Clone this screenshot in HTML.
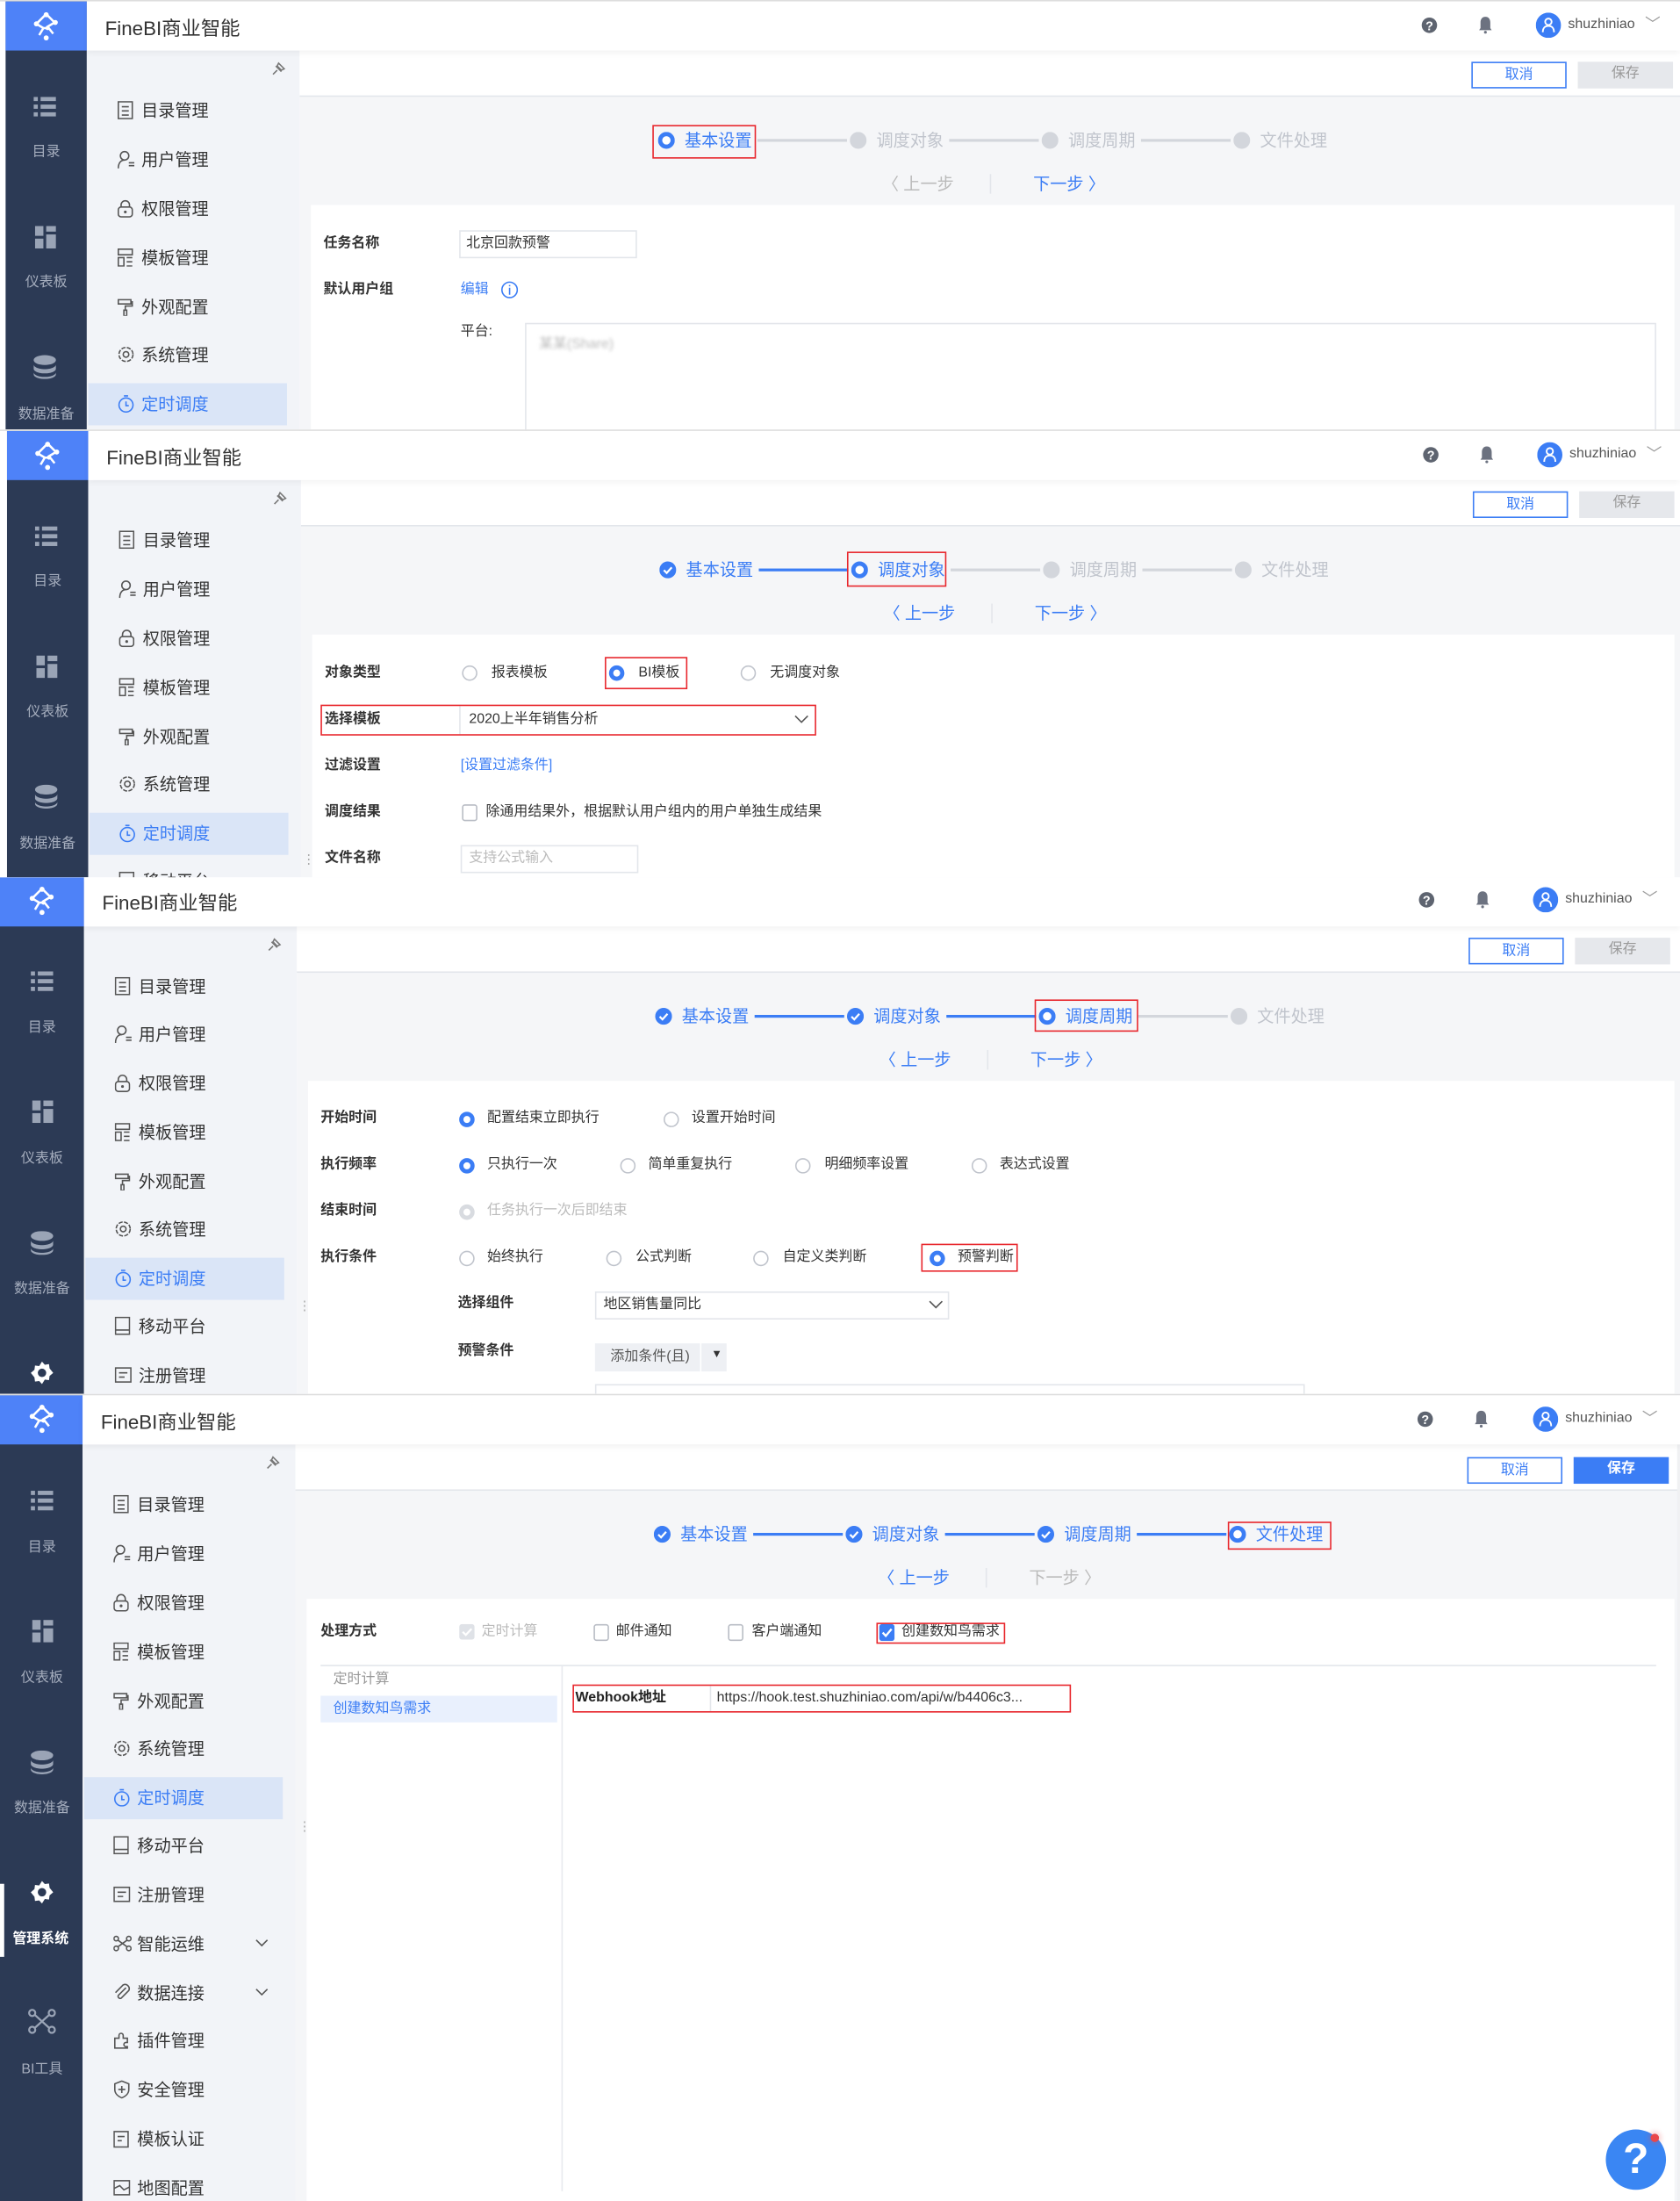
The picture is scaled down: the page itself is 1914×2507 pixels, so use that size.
<!DOCTYPE html>
<html><head><meta charset="utf-8">
<style>
*{margin:0;padding:0;box-sizing:border-box}
html,body{width:1914px;height:2507px;overflow:hidden;background:#fff}
body{font-family:"Liberation Sans","Noto Sans CJK SC",sans-serif;color:#333}
#w{position:absolute;left:0;top:0;width:1200px;height:1568px;transform:scale(1.595,1.5989);transform-origin:0 0}
.p{position:absolute;left:0;width:1200px;overflow:hidden;background:#fff}
.a{position:absolute;white-space:nowrap}
.rail{position:absolute;top:0;width:58px;height:100%;background:#2c3a55}
.logo{position:absolute;top:0;width:58px;height:35px;background:#4e82f8}
.hdr{position:absolute;top:0;height:35px;right:0;background:#fff;box-shadow:0 2px 4px rgba(0,0,0,.05);z-index:2}
.nav{position:absolute;top:35px;width:152px;height:100%;background:#f2f4f8}
.ni{position:absolute;font-size:12px;line-height:16px;color:#333;white-space:nowrap}
.ni svg{position:absolute;left:-17px;top:1px}
.rl{position:absolute;width:58px;text-align:center;font-size:10px;line-height:14px;color:#a5adbd}
.main{position:absolute;top:35px;right:0;height:100%;background:#f5f6f8}
.tb{position:absolute;left:0;right:0;top:0;height:33px;background:#fff;border-bottom:1px solid #e3e6eb}
.btn{position:absolute;width:68px;height:19px;font-size:10px;line-height:17px;text-align:center}
.form{position:absolute;top:110px;left:8px;right:4px;height:100%;background:#fff}
.lb{position:absolute;font-size:10px;font-weight:bold;line-height:14px;color:#333;white-space:nowrap}
.tx{position:absolute;font-size:10px;line-height:14px;color:#333;white-space:nowrap}
.rd{position:absolute;width:11px;height:11px;border:1px solid #c0c4cc;border-radius:50%;background:#fff}
.rd.on{border:3.5px solid #3b7df5}
.rd.dis{border:3.5px solid #d8dbe0}
.cb{position:absolute;width:10px;height:10px;border:1px solid #b8bcc4;border-radius:2px;background:#fff}
.red{position:absolute;border:1.5px solid #e8262c}
.st{position:absolute;top:0;width:600px;height:150px}
.sl{position:absolute;font-size:12px;line-height:16px;top:91px;white-space:nowrap}
.ln{position:absolute;top:98px;height:2px;width:64px}
.sc{position:absolute;top:93px}
.pv{position:absolute;top:122px;font-size:12px;line-height:16px;white-space:nowrap}
</style></head><body><div id="w">

<!-- ============ PANEL 1 ============ -->
<div class="p" style="top:0;height:306px;border-top:1px solid #ddd">
 <div class="rail" style="left:4px"></div>
 <div class="logo" style="left:4px"><svg class="a" style="left:18px;top:7px" width="22" height="22" viewBox="0 0 22 22"><path d="M11 2L4 9l5 3-3 5M11 2l6 6-5 3 4 5M9 12h3" stroke="#fff" stroke-width="1.6" fill="none"/><circle cx="11" cy="2.5" r="1.8" fill="#fff"/><circle cx="4" cy="9" r="1.8" fill="#fff"/><circle cx="17.5" cy="8" r="1.8" fill="#fff"/><circle cx="11" cy="19" r="1.8" fill="#fff"/><circle cx="12" cy="12" r="1.5" fill="#fff"/></svg></div>
 <div class="hdr" style="left:62px"><div class="a" style="left:13px;top:9px;font-size:14px;color:#333">FineBI商业智能</div>
  <svg class="a" style="left:953px;top:11px" width="12" height="12"><circle cx="6" cy="6" r="5.5" fill="#5e6470"/><text x="6" y="9.5" font-size="9" fill="#fff" text-anchor="middle" font-family="Liberation Sans" font-weight="bold">?</text></svg>
  <svg class="a" style="left:994px;top:10px" width="10" height="13"><path d="M5 1c-2.5 0-3.5 2-3.5 4v4L0.5 10.5h9L8.5 9V5C8.5 3 7.5 1 5 1z" fill="#6c7280"/><circle cx="5" cy="12" r="1" fill="#6c7280"/></svg>
  <svg class="a" style="left:1035px;top:8px" width="18" height="18"><circle cx="9" cy="9" r="9" fill="#3b7df5"/><circle cx="9" cy="6.5" r="2.3" stroke="#fff" stroke-width="1.2" fill="none"/><path d="M5 14c0-3 1.5-4.5 4-4.5s4 1.5 4 4.5" stroke="#fff" stroke-width="1.2" fill="none"/></svg>
  <div class="a" style="left:1058px;top:11px;font-size:10px;color:#555">shuzhiniao</div><div class="a" style="left:1113px;top:8px;font-size:11px;color:#999">﹀</div></div>
 <div class="nav" style="left:62px"></div>
 <svg class="a" style="left:193px;top:43px" width="11" height="11"><path d="M2 9l3-3M4 3l4 4M6 1l4 4-2 1-3-3z" stroke="#777" stroke-width="1" fill="none"/></svg>
 <div class="a" style="left:63px;top:272px;width:142px;height:30px;background:#dae5f7"></div>
 <div class="ni" style="left:101px;top:70px"><svg width="11" height="13"><rect x=".5" y=".5" width="10" height="12" stroke="#555" fill="none"/><path d="M3 4h5M3 7h5M3 10h5" stroke="#555"/></svg>目录管理</div>
 <div class="ni" style="left:101px;top:105px"><svg width="12" height="13"><circle cx="5" cy="4" r="3" stroke="#555" fill="none"/><path d="M.5 13c0-4 2-6 4.5-6M8 9h4M8 11h4" stroke="#555" fill="none"/></svg>用户管理</div>
 <div class="ni" style="left:101px;top:140px"><svg width="11" height="13"><rect x=".5" y="5.5" width="10" height="7" rx="2" stroke="#555" fill="none"/><path d="M2.5 5.5V4a3 3 0 016 0v1.5" stroke="#555" fill="none"/><circle cx="5.5" cy="9" r="1" fill="#555"/></svg>权限管理</div>
 <div class="ni" style="left:101px;top:175px"><svg width="11" height="13"><path d="M.5.5h10v4H.5zM.5 6.5h4v6h-4zM6.5 6.5h4M6.5 9.5h4M6.5 12.5h4" stroke="#555" fill="none"/></svg>模板管理</div>
 <div class="ni" style="left:101px;top:210px"><svg width="11" height="13"><path d="M.5 1.5h9v3h-9zM9.5 3h1v3H5.5v3M4.5 9h2v4h-2z" stroke="#555" fill="none"/></svg>外观配置</div>
 <div class="ni" style="left:101px;top:244px"><svg width="12" height="13"><circle cx="6" cy="6.5" r="5" stroke="#555" fill="none" stroke-dasharray="3 1"/><circle cx="6" cy="6.5" r="2" stroke="#555" fill="none"/></svg>系统管理</div>
 <div class="ni" style="left:101px;top:279px;color:#3b7df5"><svg width="12" height="13"><circle cx="6" cy="7.5" r="5" stroke="#3b7df5" fill="none"/><path d="M6 5v3h2M4.5 1h3" stroke="#3b7df5" fill="none"/></svg>定时调度</div>
 <svg class="a" style="left:24px;top:68px" width="16" height="14"><rect y="0" width="3" height="3" fill="#9aa4b6"/><rect x="5" y="0" width="11" height="3" fill="#9aa4b6"/><rect y="5.5" width="3" height="3" fill="#9aa4b6"/><rect x="5" y="5.5" width="11" height="3" fill="#9aa4b6"/><rect y="11" width="3" height="3" fill="#9aa4b6"/><rect x="5" y="11" width="11" height="3" fill="#9aa4b6"/></svg>
 <div class="rl" style="left:4px;top:101px">目录</div>
 <svg class="a" style="left:25px;top:160px" width="15" height="16"><rect width="6" height="7" fill="#9aa4b6"/><rect x="8" width="7" height="4" fill="#9aa4b6"/><rect y="9" width="6" height="7" fill="#9aa4b6"/><rect x="8" y="6" width="7" height="10" fill="#9aa4b6"/></svg>
 <div class="rl" style="left:4px;top:194px">仪表板</div>
 <svg class="a" style="left:24px;top:252px" width="16" height="17"><ellipse cx="8" cy="3.5" rx="8" ry="3.5" fill="#9aa4b6"/><path d="M0 6.5c0 2 3.5 3.5 8 3.5s8-1.5 8-3.5v3c0 2-3.5 3.5-8 3.5S0 11.5 0 9.5zM0 12c0 2 3.5 3.5 8 3.5s8-1.5 8-3.5v1.5c0 2-3.5 3.5-8 3.5S0 15.5 0 13.5z" fill="#9aa4b6"/></svg>
 <div class="rl" style="left:4px;top:288px">数据准备</div>
 <div class="main" style="left:214px"><div class="tb"></div>
  <div class="btn" style="left:837px;top:8px;border:1px solid #3b7df5;color:#3b7df5;background:#fff">取消</div>
  <div class="btn" style="left:913px;top:8px;background:#e6e8ec;color:#999">保存</div>
  <div class="form" style="left:8px"></div></div>
 <div class="st" style="left:476px">
  <svg class="sc" style="left:-6px" width="12" height="12"><circle cx="6" cy="6" r="4.5" fill="#fff" stroke="#3b7df5" stroke-width="3"/></svg>
  <div class="sl" style="left:13px;color:#3b7df5">基本设置</div>
  <div class="ln" style="left:65px;background:#d3d6dc"></div>
  <svg class="sc" style="left:131px" width="12" height="12"><circle cx="6" cy="6" r="6" fill="#d3d6dc"/></svg>
  <div class="sl" style="left:150px;color:#c0c4cc">调度对象</div>
  <div class="ln" style="left:202px;background:#d3d6dc"></div>
  <svg class="sc" style="left:268px" width="12" height="12"><circle cx="6" cy="6" r="6" fill="#d3d6dc"/></svg>
  <div class="sl" style="left:287px;color:#c0c4cc">调度周期</div>
  <div class="ln" style="left:339px;background:#d3d6dc"></div>
  <svg class="sc" style="left:405px" width="12" height="12"><circle cx="6" cy="6" r="6" fill="#d3d6dc"/></svg>
  <div class="sl" style="left:424px;color:#c0c4cc">文件处理</div>
  <div class="pv" style="left:154px;color:#bbb">〈 上一步</div>
  <div class="a" style="left:231px;top:123px;width:1px;height:14px;background:#e3e6eb"></div>
  <div class="pv" style="left:262px;color:#3b7df5">下一步 〉</div>
  <div class="red" style="left:-10px;top:88px;width:74px;height:24px"></div>
 </div>
 <div class="lb" style="left:231px;top:166px">任务名称</div>
 <div class="a" style="left:328px;top:163px;width:127px;height:20px;border:1px solid #e3e6eb"></div>
 <div class="tx" style="left:333px;top:166px">北京回款预警</div>
 <div class="lb" style="left:231px;top:199px">默认用户组</div>
 <div class="tx" style="left:329px;top:199px;color:#3b7df5">编辑</div>
 <svg class="a" style="left:358px;top:199px" width="12" height="13"><circle cx="6" cy="6.5" r="5.5" stroke="#3b7df5" fill="none"/><path d="M6 5v5M6 3v1" stroke="#3b7df5"/></svg>
 <div class="tx" style="left:329px;top:229px">平台:</div>
 <div class="a" style="left:375px;top:229px;width:808px;height:90px;border:1px solid #e3e6eb"></div>
 <div class="tx" style="left:385px;top:238px;color:#bbb;filter:blur(1.2px)">某某(Share)</div>
</div>

<!-- ============ PANEL 2 ============ -->
<div class="p" style="top:306px;height:319px;border-top:1px solid #ddd">
 <div class="rail" style="left:5px"></div>
 <div class="logo" style="left:5px"><svg class="a" style="left:18px;top:7px" width="22" height="22" viewBox="0 0 22 22"><path d="M11 2L4 9l5 3-3 5M11 2l6 6-5 3 4 5M9 12h3" stroke="#fff" stroke-width="1.6" fill="none"/><circle cx="11" cy="2.5" r="1.8" fill="#fff"/><circle cx="4" cy="9" r="1.8" fill="#fff"/><circle cx="17.5" cy="8" r="1.8" fill="#fff"/><circle cx="11" cy="19" r="1.8" fill="#fff"/><circle cx="12" cy="12" r="1.5" fill="#fff"/></svg></div>
 <div class="hdr" style="left:63px"><div class="a" style="left:13px;top:9px;font-size:14px;color:#333">FineBI商业智能</div>
  <svg class="a" style="left:953px;top:11px" width="12" height="12"><circle cx="6" cy="6" r="5.5" fill="#5e6470"/><text x="6" y="9.5" font-size="9" fill="#fff" text-anchor="middle" font-family="Liberation Sans" font-weight="bold">?</text></svg>
  <svg class="a" style="left:994px;top:10px" width="10" height="13"><path d="M5 1c-2.5 0-3.5 2-3.5 4v4L0.5 10.5h9L8.5 9V5C8.5 3 7.5 1 5 1z" fill="#6c7280"/><circle cx="5" cy="12" r="1" fill="#6c7280"/></svg>
  <svg class="a" style="left:1035px;top:8px" width="18" height="18"><circle cx="9" cy="9" r="9" fill="#3b7df5"/><circle cx="9" cy="6.5" r="2.3" stroke="#fff" stroke-width="1.2" fill="none"/><path d="M5 14c0-3 1.5-4.5 4-4.5s4 1.5 4 4.5" stroke="#fff" stroke-width="1.2" fill="none"/></svg>
  <div class="a" style="left:1058px;top:11px;font-size:10px;color:#555">shuzhiniao</div><div class="a" style="left:1113px;top:8px;font-size:11px;color:#999">﹀</div></div>
 <div class="nav" style="left:63px"></div>
 <svg class="a" style="left:194px;top:43px" width="11" height="11"><path d="M2 9l3-3M4 3l4 4M6 1l4 4-2 1-3-3z" stroke="#777" stroke-width="1" fill="none"/></svg>
 <div class="a" style="left:64px;top:272px;width:142px;height:30px;background:#dae5f7"></div>
 <div class="ni" style="left:102px;top:70px"><svg width="11" height="13"><rect x=".5" y=".5" width="10" height="12" stroke="#555" fill="none"/><path d="M3 4h5M3 7h5M3 10h5" stroke="#555"/></svg>目录管理</div>
 <div class="ni" style="left:102px;top:105px"><svg width="12" height="13"><circle cx="5" cy="4" r="3" stroke="#555" fill="none"/><path d="M.5 13c0-4 2-6 4.5-6M8 9h4M8 11h4" stroke="#555" fill="none"/></svg>用户管理</div>
 <div class="ni" style="left:102px;top:140px"><svg width="11" height="13"><rect x=".5" y="5.5" width="10" height="7" rx="2" stroke="#555" fill="none"/><path d="M2.5 5.5V4a3 3 0 016 0v1.5" stroke="#555" fill="none"/><circle cx="5.5" cy="9" r="1" fill="#555"/></svg>权限管理</div>
 <div class="ni" style="left:102px;top:175px"><svg width="11" height="13"><path d="M.5.5h10v4H.5zM.5 6.5h4v6h-4zM6.5 6.5h4M6.5 9.5h4M6.5 12.5h4" stroke="#555" fill="none"/></svg>模板管理</div>
 <div class="ni" style="left:102px;top:210px"><svg width="11" height="13"><path d="M.5 1.5h9v3h-9zM9.5 3h1v3H5.5v3M4.5 9h2v4h-2z" stroke="#555" fill="none"/></svg>外观配置</div>
 <div class="ni" style="left:102px;top:244px"><svg width="12" height="13"><circle cx="6" cy="6.5" r="5" stroke="#555" fill="none" stroke-dasharray="3 1"/><circle cx="6" cy="6.5" r="2" stroke="#555" fill="none"/></svg>系统管理</div>
 <div class="ni" style="left:102px;top:279px;color:#3b7df5"><svg width="12" height="13"><circle cx="6" cy="7.5" r="5" stroke="#3b7df5" fill="none"/><path d="M6 5v3h2M4.5 1h3" stroke="#3b7df5" fill="none"/></svg>定时调度</div>
 <div class="ni" style="left:102px;top:313px"><svg width="11" height="13"><rect x=".5" y=".5" width="10" height="12" stroke="#555" fill="none"/></svg>移动平台</div>
 <svg class="a" style="left:25px;top:68px" width="16" height="14"><rect y="0" width="3" height="3" fill="#9aa4b6"/><rect x="5" y="0" width="11" height="3" fill="#9aa4b6"/><rect y="5.5" width="3" height="3" fill="#9aa4b6"/><rect x="5" y="5.5" width="11" height="3" fill="#9aa4b6"/><rect y="11" width="3" height="3" fill="#9aa4b6"/><rect x="5" y="11" width="11" height="3" fill="#9aa4b6"/></svg>
 <div class="rl" style="left:5px;top:101px">目录</div>
 <svg class="a" style="left:26px;top:160px" width="15" height="16"><rect width="6" height="7" fill="#9aa4b6"/><rect x="8" width="7" height="4" fill="#9aa4b6"/><rect y="9" width="6" height="7" fill="#9aa4b6"/><rect x="8" y="6" width="7" height="10" fill="#9aa4b6"/></svg>
 <div class="rl" style="left:5px;top:194px">仪表板</div>
 <svg class="a" style="left:25px;top:252px" width="16" height="17"><ellipse cx="8" cy="3.5" rx="8" ry="3.5" fill="#9aa4b6"/><path d="M0 6.5c0 2 3.5 3.5 8 3.5s8-1.5 8-3.5v3c0 2-3.5 3.5-8 3.5S0 11.5 0 9.5zM0 12c0 2 3.5 3.5 8 3.5s8-1.5 8-3.5v1.5c0 2-3.5 3.5-8 3.5S0 15.5 0 13.5z" fill="#9aa4b6"/></svg>
 <div class="rl" style="left:5px;top:288px">数据准备</div>
 <div class="main" style="left:215px"><div class="tb"></div>
  <div class="btn" style="left:837px;top:8px;border:1px solid #3b7df5;color:#3b7df5;background:#fff">取消</div>
  <div class="btn" style="left:913px;top:8px;background:#e6e8ec;color:#999">保存</div>
  <div class="form" style="left:8px"></div></div>
 <div class="a" style="left:216px;top:300px;font-size:9px;color:#aaa">⋮</div>
 <div class="st" style="left:477px">
  <svg class="sc" style="left:-6px" width="12" height="12"><circle cx="6" cy="6" r="6" fill="#3b7df5"/><path d="M3.2 6.2l2 2 3.6-4" stroke="#fff" stroke-width="1.4" fill="none"/></svg>
  <div class="sl" style="left:13px;color:#3b7df5">基本设置</div>
  <div class="ln" style="left:65px;background:#3b7df5"></div>
  <svg class="sc" style="left:131px" width="12" height="12"><circle cx="6" cy="6" r="4.5" fill="#fff" stroke="#3b7df5" stroke-width="3"/></svg>
  <div class="sl" style="left:150px;color:#3b7df5">调度对象</div>
  <div class="ln" style="left:202px;background:#d3d6dc"></div>
  <svg class="sc" style="left:268px" width="12" height="12"><circle cx="6" cy="6" r="6" fill="#d3d6dc"/></svg>
  <div class="sl" style="left:287px;color:#c0c4cc">调度周期</div>
  <div class="ln" style="left:339px;background:#d3d6dc"></div>
  <svg class="sc" style="left:405px" width="12" height="12"><circle cx="6" cy="6" r="6" fill="#d3d6dc"/></svg>
  <div class="sl" style="left:424px;color:#c0c4cc">文件处理</div>
  <div class="pv" style="left:154px;color:#3b7df5">〈 上一步</div>
  <div class="a" style="left:231px;top:123px;width:1px;height:14px;background:#e3e6eb"></div>
  <div class="pv" style="left:262px;color:#3b7df5">下一步 〉</div>
  <div class="red" style="left:128px;top:86px;width:71px;height:25px"></div>
 </div>
 <div class="lb" style="left:232px;top:166px">对象类型</div>
 <div class="rd" style="left:330px;top:167px"></div><div class="tx" style="left:351px;top:166px">报表模板</div>
 <div class="rd on" style="left:435px;top:167px"></div><div class="tx" style="left:456px;top:166px">BI模板</div>
 <div class="red" style="left:432px;top:161px;width:59px;height:23px"></div>
 <div class="rd" style="left:529px;top:167px"></div><div class="tx" style="left:550px;top:166px">无调度对象</div>
 <div class="lb" style="left:232px;top:199px">选择模板</div>
 <div class="a" style="left:328px;top:196px;width:254px;height:20px;border-left:1px solid #e3e6eb"></div>
 <div class="tx" style="left:335px;top:199px">2020上半年销售分析</div>
 <svg class="a" style="left:567px;top:202px" width="11" height="7"><path d="M1 1l4.5 4.5L10 1" stroke="#555" fill="none"/></svg>
 <div class="red" style="left:229px;top:195px;width:354px;height:22px"></div>
 <div class="lb" style="left:232px;top:232px">过滤设置</div>
 <div class="tx" style="left:329px;top:232px;color:#3b7df5">[设置过滤条件]</div>
 <div class="lb" style="left:232px;top:265px">调度结果</div>
 <div class="cb" style="left:330px;top:266px;width:11px;height:12px"></div>
 <div class="tx" style="left:347px;top:265px">除通用结果外，根据默认用户组内的用户单独生成结果</div>
 <div class="lb" style="left:232px;top:298px">文件名称</div>
 <div class="a" style="left:329px;top:295px;width:127px;height:20px;border:1px solid #e3e6eb"></div>
 <div class="tx" style="left:335px;top:298px;color:#bbb">支持公式输入</div>
</div>

<!-- ============ PANEL 3 ============ -->
<div class="p" style="top:625px;height:368px">
 <div class="rail" style="left:0;width:60px"></div>
 <div class="logo" style="left:0;width:60px"><svg class="a" style="left:19px;top:6px" width="22" height="22" viewBox="0 0 22 22"><path d="M11 2L4 9l5 3-3 5M11 2l6 6-5 3 4 5M9 12h3" stroke="#fff" stroke-width="1.6" fill="none"/><circle cx="11" cy="2.5" r="1.8" fill="#fff"/><circle cx="4" cy="9" r="1.8" fill="#fff"/><circle cx="17.5" cy="8" r="1.8" fill="#fff"/><circle cx="11" cy="19" r="1.8" fill="#fff"/><circle cx="12" cy="12" r="1.5" fill="#fff"/></svg></div>
 <div class="hdr" style="left:60px"><div class="a" style="left:13px;top:8px;font-size:14px;color:#333">FineBI商业智能</div>
  <svg class="a" style="left:953px;top:10px" width="12" height="12"><circle cx="6" cy="6" r="5.5" fill="#5e6470"/><text x="6" y="9.5" font-size="9" fill="#fff" text-anchor="middle" font-family="Liberation Sans" font-weight="bold">?</text></svg>
  <svg class="a" style="left:994px;top:9px" width="10" height="13"><path d="M5 1c-2.5 0-3.5 2-3.5 4v4L0.5 10.5h9L8.5 9V5C8.5 3 7.5 1 5 1z" fill="#6c7280"/><circle cx="5" cy="12" r="1" fill="#6c7280"/></svg>
  <svg class="a" style="left:1035px;top:7px" width="18" height="18"><circle cx="9" cy="9" r="9" fill="#3b7df5"/><circle cx="9" cy="6.5" r="2.3" stroke="#fff" stroke-width="1.2" fill="none"/><path d="M5 14c0-3 1.5-4.5 4-4.5s4 1.5 4 4.5" stroke="#fff" stroke-width="1.2" fill="none"/></svg>
  <div class="a" style="left:1058px;top:10px;font-size:10px;color:#555">shuzhiniao</div><div class="a" style="left:1113px;top:7px;font-size:11px;color:#999">﹀</div></div>
 <div class="nav" style="left:60px"></div>
 <svg class="a" style="left:190px;top:43px" width="11" height="11"><path d="M2 9l3-3M4 3l4 4M6 1l4 4-2 1-3-3z" stroke="#777" stroke-width="1" fill="none"/></svg>
 <div class="a" style="left:61px;top:271px;width:142px;height:30px;background:#dae5f7"></div>
 <div class="ni" style="left:99px;top:70px"><svg width="11" height="13"><rect x=".5" y=".5" width="10" height="12" stroke="#555" fill="none"/><path d="M3 4h5M3 7h5M3 10h5" stroke="#555"/></svg>目录管理</div>
 <div class="ni" style="left:99px;top:104px"><svg width="12" height="13"><circle cx="5" cy="4" r="3" stroke="#555" fill="none"/><path d="M.5 13c0-4 2-6 4.5-6M8 9h4M8 11h4" stroke="#555" fill="none"/></svg>用户管理</div>
 <div class="ni" style="left:99px;top:139px"><svg width="11" height="13"><rect x=".5" y="5.5" width="10" height="7" rx="2" stroke="#555" fill="none"/><path d="M2.5 5.5V4a3 3 0 016 0v1.5" stroke="#555" fill="none"/><circle cx="5.5" cy="9" r="1" fill="#555"/></svg>权限管理</div>
 <div class="ni" style="left:99px;top:174px"><svg width="11" height="13"><path d="M.5.5h10v4H.5zM.5 6.5h4v6h-4zM6.5 6.5h4M6.5 9.5h4M6.5 12.5h4" stroke="#555" fill="none"/></svg>模板管理</div>
 <div class="ni" style="left:99px;top:209px"><svg width="11" height="13"><path d="M.5 1.5h9v3h-9zM9.5 3h1v3H5.5v3M4.5 9h2v4h-2z" stroke="#555" fill="none"/></svg>外观配置</div>
 <div class="ni" style="left:99px;top:243px"><svg width="12" height="13"><circle cx="6" cy="6.5" r="5" stroke="#555" fill="none" stroke-dasharray="3 1"/><circle cx="6" cy="6.5" r="2" stroke="#555" fill="none"/></svg>系统管理</div>
 <div class="ni" style="left:99px;top:278px;color:#3b7df5"><svg width="12" height="13"><circle cx="6" cy="7.5" r="5" stroke="#3b7df5" fill="none"/><path d="M6 5v3h2M4.5 1h3" stroke="#3b7df5" fill="none"/></svg>定时调度</div>
 <div class="ni" style="left:99px;top:312px"><svg width="11" height="13"><rect x=".5" y=".5" width="10" height="12" stroke="#555" fill="none"/><path d="M.5 9.5h10" stroke="#555"/></svg>移动平台</div>
 <div class="ni" style="left:99px;top:347px"><svg width="12" height="13"><rect x=".5" y="1.5" width="11" height="10" stroke="#555" fill="none"/><path d="M3 5h6M3 8h4" stroke="#555"/></svg>注册管理</div>
 <svg class="a" style="left:22px;top:67px" width="16" height="14"><rect y="0" width="3" height="3" fill="#9aa4b6"/><rect x="5" y="0" width="11" height="3" fill="#9aa4b6"/><rect y="5.5" width="3" height="3" fill="#9aa4b6"/><rect x="5" y="5.5" width="11" height="3" fill="#9aa4b6"/><rect y="11" width="3" height="3" fill="#9aa4b6"/><rect x="5" y="11" width="11" height="3" fill="#9aa4b6"/></svg>
 <div class="rl" style="left:1px;top:101px">目录</div>
 <svg class="a" style="left:23px;top:159px" width="15" height="16"><rect width="6" height="7" fill="#9aa4b6"/><rect x="8" width="7" height="4" fill="#9aa4b6"/><rect y="9" width="6" height="7" fill="#9aa4b6"/><rect x="8" y="6" width="7" height="10" fill="#9aa4b6"/></svg>
 <div class="rl" style="left:1px;top:194px">仪表板</div>
 <svg class="a" style="left:22px;top:252px" width="16" height="17"><ellipse cx="8" cy="3.5" rx="8" ry="3.5" fill="#9aa4b6"/><path d="M0 6.5c0 2 3.5 3.5 8 3.5s8-1.5 8-3.5v3c0 2-3.5 3.5-8 3.5S0 11.5 0 9.5zM0 12c0 2 3.5 3.5 8 3.5s8-1.5 8-3.5v1.5c0 2-3.5 3.5-8 3.5S0 15.5 0 13.5z" fill="#9aa4b6"/></svg>
 <div class="rl" style="left:1px;top:287px">数据准备</div>
 <svg class="a" style="left:21px;top:344px" width="18" height="18" viewBox="0 0 18 18"><path d="M9 1l2 2.2 3-.4.4 3L17 9l-2.6 2.2-.4 3-3-.4L9 17l-2-2.2-3 .4-.4-3L1 9l2.6-2.2.4-3 3 .4z" fill="#fff"/><circle cx="9" cy="9" r="3" fill="#2c3a55"/></svg>
 <div class="main" style="left:212px"><div class="tb"></div>
  <div class="btn" style="left:837px;top:8px;border:1px solid #3b7df5;color:#3b7df5;background:#fff">取消</div>
  <div class="btn" style="left:913px;top:8px;background:#e6e8ec;color:#999">保存</div>
  <div class="form" style="left:8px"></div></div>
 <div class="a" style="left:213px;top:300px;font-size:9px;color:#aaa">⋮</div>
 <div class="st" style="left:474px">
  <svg class="sc" style="left:-6px" width="12" height="12"><circle cx="6" cy="6" r="6" fill="#3b7df5"/><path d="M3.2 6.2l2 2 3.6-4" stroke="#fff" stroke-width="1.4" fill="none"/></svg>
  <div class="sl" style="left:13px;color:#3b7df5">基本设置</div>
  <div class="ln" style="left:65px;background:#3b7df5"></div>
  <svg class="sc" style="left:131px" width="12" height="12"><circle cx="6" cy="6" r="6" fill="#3b7df5"/><path d="M3.2 6.2l2 2 3.6-4" stroke="#fff" stroke-width="1.4" fill="none"/></svg>
  <div class="sl" style="left:150px;color:#3b7df5">调度对象</div>
  <div class="ln" style="left:202px;background:#3b7df5"></div>
  <svg class="sc" style="left:268px" width="12" height="12"><circle cx="6" cy="6" r="4.5" fill="#fff" stroke="#3b7df5" stroke-width="3"/></svg>
  <div class="sl" style="left:287px;color:#3b7df5">调度周期</div>
  <div class="ln" style="left:339px;background:#d3d6dc"></div>
  <svg class="sc" style="left:405px" width="12" height="12"><circle cx="6" cy="6" r="6" fill="#d3d6dc"/></svg>
  <div class="sl" style="left:424px;color:#c0c4cc">文件处理</div>
  <div class="pv" style="left:154px;color:#3b7df5">〈 上一步</div>
  <div class="a" style="left:231px;top:123px;width:1px;height:14px;background:#e3e6eb"></div>
  <div class="pv" style="left:262px;color:#3b7df5">下一步 〉</div>
  <div class="red" style="left:265px;top:87px;width:74px;height:23px"></div>
 </div>
 <div class="lb" style="left:229px;top:165px">开始时间</div>
 <div class="rd on" style="left:328px;top:167px"></div><div class="tx" style="left:348px;top:165px">配置结束立即执行</div>
 <div class="rd" style="left:474px;top:167px"></div><div class="tx" style="left:494px;top:165px">设置开始时间</div>
 <div class="lb" style="left:229px;top:198px">执行频率</div>
 <div class="rd on" style="left:328px;top:200px"></div><div class="tx" style="left:348px;top:198px">只执行一次</div>
 <div class="rd" style="left:443px;top:200px"></div><div class="tx" style="left:463px;top:198px">简单重复执行</div>
 <div class="rd" style="left:568px;top:200px"></div><div class="tx" style="left:589px;top:198px">明细频率设置</div>
 <div class="rd" style="left:694px;top:200px"></div><div class="tx" style="left:714px;top:198px">表达式设置</div>
 <div class="lb" style="left:229px;top:231px">结束时间</div>
 <div class="rd dis" style="left:328px;top:233px"></div><div class="tx" style="left:348px;top:231px;color:#bbb">任务执行一次后即结束</div>
 <div class="lb" style="left:229px;top:264px">执行条件</div>
 <div class="rd" style="left:328px;top:266px"></div><div class="tx" style="left:348px;top:264px">始终执行</div>
 <div class="rd" style="left:433px;top:266px"></div><div class="tx" style="left:454px;top:264px">公式判断</div>
 <div class="rd" style="left:538px;top:266px"></div><div class="tx" style="left:559px;top:264px">自定义类判断</div>
 <div class="rd on" style="left:664px;top:266px"></div><div class="tx" style="left:684px;top:264px">预警判断</div>
 <div class="red" style="left:658px;top:261px;width:69px;height:20px"></div>
 <div class="lb" style="left:327px;top:297px">选择组件</div>
 <div class="a" style="left:425px;top:295px;width:253px;height:20px;border:1px solid #e3e6eb"></div>
 <div class="tx" style="left:431px;top:298px">地区销售量同比</div>
 <svg class="a" style="left:663px;top:301px" width="11" height="7"><path d="M1 1l4.5 4.5L10 1" stroke="#555" fill="none"/></svg>
 <div class="lb" style="left:327px;top:331px">预警条件</div>
 <div class="a" style="left:425px;top:332px;width:75px;height:20px;background:#eef0f4"></div>
 <div class="a" style="left:501px;top:332px;width:18px;height:20px;background:#eef0f4"></div>
 <div class="tx" style="left:436px;top:335px;color:#555">添加条件(且)</div>
 <div class="a" style="left:508px;top:335px;font-size:8px;color:#333">▼</div>
 <div class="a" style="left:425px;top:361px;width:507px;height:20px;border:1px solid #e3e6eb"></div>
</div>

<!-- ============ PANEL 4 ============ -->
<div class="p" style="top:993px;height:575px;border-top:1px solid #ddd">
 <div class="rail" style="left:0;width:59px"></div>
 <div class="logo" style="left:0;width:59px"><svg class="a" style="left:19px;top:6px" width="22" height="22" viewBox="0 0 22 22"><path d="M11 2L4 9l5 3-3 5M11 2l6 6-5 3 4 5M9 12h3" stroke="#fff" stroke-width="1.6" fill="none"/><circle cx="11" cy="2.5" r="1.8" fill="#fff"/><circle cx="4" cy="9" r="1.8" fill="#fff"/><circle cx="17.5" cy="8" r="1.8" fill="#fff"/><circle cx="11" cy="19" r="1.8" fill="#fff"/><circle cx="12" cy="12" r="1.5" fill="#fff"/></svg></div>
 <div class="hdr" style="left:59px"><div class="a" style="left:13px;top:9px;font-size:14px;color:#333">FineBI商业智能</div>
  <svg class="a" style="left:953px;top:11px" width="12" height="12"><circle cx="6" cy="6" r="5.5" fill="#5e6470"/><text x="6" y="9.5" font-size="9" fill="#fff" text-anchor="middle" font-family="Liberation Sans" font-weight="bold">?</text></svg>
  <svg class="a" style="left:994px;top:10px" width="10" height="13"><path d="M5 1c-2.5 0-3.5 2-3.5 4v4L0.5 10.5h9L8.5 9V5C8.5 3 7.5 1 5 1z" fill="#6c7280"/><circle cx="5" cy="12" r="1" fill="#6c7280"/></svg>
  <svg class="a" style="left:1036px;top:8px" width="18" height="18"><circle cx="9" cy="9" r="9" fill="#3b7df5"/><circle cx="9" cy="6.5" r="2.3" stroke="#fff" stroke-width="1.2" fill="none"/><path d="M5 14c0-3 1.5-4.5 4-4.5s4 1.5 4 4.5" stroke="#fff" stroke-width="1.2" fill="none"/></svg>
  <div class="a" style="left:1059px;top:11px;font-size:10px;color:#555">shuzhiniao</div><div class="a" style="left:1114px;top:8px;font-size:11px;color:#999">﹀</div></div>
 <div class="nav" style="left:59px"></div>
 <svg class="a" style="left:189px;top:43px" width="11" height="11"><path d="M2 9l3-3M4 3l4 4M6 1l4 4-2 1-3-3z" stroke="#777" stroke-width="1" fill="none"/></svg>
 <div class="a" style="left:60px;top:272px;width:142px;height:30px;background:#dae5f7"></div>
 <div class="ni" style="left:98px;top:70px"><svg width="11" height="13"><rect x=".5" y=".5" width="10" height="12" stroke="#555" fill="none"/><path d="M3 4h5M3 7h5M3 10h5" stroke="#555"/></svg>目录管理</div>
 <div class="ni" style="left:98px;top:105px"><svg width="12" height="13"><circle cx="5" cy="4" r="3" stroke="#555" fill="none"/><path d="M.5 13c0-4 2-6 4.5-6M8 9h4M8 11h4" stroke="#555" fill="none"/></svg>用户管理</div>
 <div class="ni" style="left:98px;top:140px"><svg width="11" height="13"><rect x=".5" y="5.5" width="10" height="7" rx="2" stroke="#555" fill="none"/><path d="M2.5 5.5V4a3 3 0 016 0v1.5" stroke="#555" fill="none"/><circle cx="5.5" cy="9" r="1" fill="#555"/></svg>权限管理</div>
 <div class="ni" style="left:98px;top:175px"><svg width="11" height="13"><path d="M.5.5h10v4H.5zM.5 6.5h4v6h-4zM6.5 6.5h4M6.5 9.5h4M6.5 12.5h4" stroke="#555" fill="none"/></svg>模板管理</div>
 <div class="ni" style="left:98px;top:210px"><svg width="11" height="13"><path d="M.5 1.5h9v3h-9zM9.5 3h1v3H5.5v3M4.5 9h2v4h-2z" stroke="#555" fill="none"/></svg>外观配置</div>
 <div class="ni" style="left:98px;top:244px"><svg width="12" height="13"><circle cx="6" cy="6.5" r="5" stroke="#555" fill="none" stroke-dasharray="3 1"/><circle cx="6" cy="6.5" r="2" stroke="#555" fill="none"/></svg>系统管理</div>
 <div class="ni" style="left:98px;top:279px;color:#3b7df5"><svg width="12" height="13"><circle cx="6" cy="7.5" r="5" stroke="#3b7df5" fill="none"/><path d="M6 5v3h2M4.5 1h3" stroke="#3b7df5" fill="none"/></svg>定时调度</div>
 <div class="ni" style="left:98px;top:313px"><svg width="11" height="13"><rect x=".5" y=".5" width="10" height="12" stroke="#555" fill="none"/><path d="M.5 9.5h10" stroke="#555"/></svg>移动平台</div>
 <div class="ni" style="left:98px;top:348px"><svg width="12" height="13"><rect x=".5" y="1.5" width="11" height="10" stroke="#555" fill="none"/><path d="M3 5h6M3 8h4" stroke="#555"/></svg>注册管理</div>
 <div class="ni" style="left:98px;top:383px"><svg width="13" height="13"><circle cx="2" cy="3" r="1.6" stroke="#555" fill="none"/><circle cx="11" cy="3" r="1.6" stroke="#555" fill="none"/><circle cx="2" cy="10" r="1.6" stroke="#555" fill="none"/><circle cx="11" cy="10" r="1.6" stroke="#555" fill="none"/><path d="M3 4l7 5M10 4l-7 5" stroke="#555"/></svg>智能运维</div>
 <div class="ni" style="left:98px;top:418px"><svg width="12" height="13"><path d="M9 3L3.5 8.5a1.5 1.5 0 002 2L11 5a3 3 0 00-4-4L1.5 6.5" stroke="#555" fill="none"/></svg>数据连接</div>
 <div class="ni" style="left:98px;top:452px"><svg width="13" height="13"><path d="M1 5h3V3a1.5 1.5 0 013 0v2h3v3h-1a1.5 1.5 0 000 3h1v1H1z" stroke="#555" fill="none"/></svg>插件管理</div>
 <div class="ni" style="left:98px;top:487px"><svg width="12" height="13"><path d="M6 .5l5 2v4c0 3-2.5 5-5 6-2.5-1-5-3-5-6v-4z" stroke="#555" fill="none"/><path d="M6 4v5M3.5 6.5h5" stroke="#555"/></svg>安全管理</div>
 <div class="ni" style="left:98px;top:522px"><svg width="12" height="13"><rect x=".5" y="1.5" width="10" height="11" stroke="#555" fill="none"/><path d="M3 5h5M3 8h3" stroke="#555"/></svg>模板认证</div>
 <div class="ni" style="left:98px;top:557px"><svg width="12" height="13"><rect x=".5" y="1.5" width="11" height="10" stroke="#555" fill="none"/><path d="M.5 7l4-2 3 3 4-2" stroke="#555" fill="none"/></svg>地图配置</div>
 <svg class="a" style="left:182px;top:387px" width="10" height="6"><path d="M1 1l4 4 4-4" stroke="#555" fill="none"/></svg>
 <svg class="a" style="left:182px;top:422px" width="10" height="6"><path d="M1 1l4 4 4-4" stroke="#555" fill="none"/></svg>
 <svg class="a" style="left:22px;top:68px" width="16" height="14"><rect y="0" width="3" height="3" fill="#9aa4b6"/><rect x="5" y="0" width="11" height="3" fill="#9aa4b6"/><rect y="5.5" width="3" height="3" fill="#9aa4b6"/><rect x="5" y="5.5" width="11" height="3" fill="#9aa4b6"/><rect y="11" width="3" height="3" fill="#9aa4b6"/><rect x="5" y="11" width="11" height="3" fill="#9aa4b6"/></svg>
 <div class="rl" style="left:1px;top:102px">目录</div>
 <svg class="a" style="left:23px;top:160px" width="15" height="16"><rect width="6" height="7" fill="#9aa4b6"/><rect x="8" width="7" height="4" fill="#9aa4b6"/><rect y="9" width="6" height="7" fill="#9aa4b6"/><rect x="8" y="6" width="7" height="10" fill="#9aa4b6"/></svg>
 <div class="rl" style="left:1px;top:195px">仪表板</div>
 <svg class="a" style="left:22px;top:253px" width="16" height="17"><ellipse cx="8" cy="3.5" rx="8" ry="3.5" fill="#9aa4b6"/><path d="M0 6.5c0 2 3.5 3.5 8 3.5s8-1.5 8-3.5v3c0 2-3.5 3.5-8 3.5S0 11.5 0 9.5zM0 12c0 2 3.5 3.5 8 3.5s8-1.5 8-3.5v1.5c0 2-3.5 3.5-8 3.5S0 15.5 0 13.5z" fill="#9aa4b6"/></svg>
 <div class="rl" style="left:1px;top:288px">数据准备</div>
 <div class="a" style="left:0;top:348px;width:3px;height:52px;background:#fff"></div>
 <svg class="a" style="left:21px;top:345px" width="18" height="18" viewBox="0 0 18 18"><path d="M9 1l2 2.2 3-.4.4 3L17 9l-2.6 2.2-.4 3-3-.4L9 17l-2-2.2-3 .4-.4-3L1 9l2.6-2.2.4-3 3 .4z" fill="#fff"/><circle cx="9" cy="9" r="3" fill="#2c3a55"/></svg>
 <div class="rl" style="left:0;top:381px;color:#fff;font-weight:bold">管理系统</div>
 <svg class="a" style="left:20px;top:437px" width="20" height="18"><circle cx="3" cy="3" r="2.2" stroke="#9aa4b6" stroke-width="1.4" fill="none"/><circle cx="17" cy="3" r="2.2" stroke="#9aa4b6" stroke-width="1.4" fill="none"/><circle cx="3" cy="15" r="2.2" stroke="#9aa4b6" stroke-width="1.4" fill="none"/><circle cx="17" cy="15" r="2.2" stroke="#9aa4b6" stroke-width="1.4" fill="none"/><path d="M5 4.5l10 9M15 4.5l-10 9" stroke="#9aa4b6" stroke-width="1.4"/></svg>
 <div class="rl" style="left:1px;top:474px">BI工具</div>
 <div class="main" style="left:211px"><div class="tb"></div>
  <div class="btn" style="left:837px;top:9px;border:1px solid #3b7df5;color:#3b7df5;background:#fff">取消</div>
  <div class="btn" style="left:913px;top:9px;background:#3b7df5;color:#fff;font-weight:bold">保存</div>
  <div class="form" style="left:8px;height:456px"></div></div>
 <div class="a" style="left:213px;top:302px;font-size:9px;color:#aaa">⋮</div>
 <div class="st" style="left:473px">
  <svg class="sc" style="left:-6px" width="12" height="12"><circle cx="6" cy="6" r="6" fill="#3b7df5"/><path d="M3.2 6.2l2 2 3.6-4" stroke="#fff" stroke-width="1.4" fill="none"/></svg>
  <div class="sl" style="left:13px;color:#3b7df5">基本设置</div>
  <div class="ln" style="left:65px;background:#3b7df5"></div>
  <svg class="sc" style="left:131px" width="12" height="12"><circle cx="6" cy="6" r="6" fill="#3b7df5"/><path d="M3.2 6.2l2 2 3.6-4" stroke="#fff" stroke-width="1.4" fill="none"/></svg>
  <div class="sl" style="left:150px;color:#3b7df5">调度对象</div>
  <div class="ln" style="left:202px;background:#3b7df5"></div>
  <svg class="sc" style="left:268px" width="12" height="12"><circle cx="6" cy="6" r="6" fill="#3b7df5"/><path d="M3.2 6.2l2 2 3.6-4" stroke="#fff" stroke-width="1.4" fill="none"/></svg>
  <div class="sl" style="left:287px;color:#3b7df5">调度周期</div>
  <div class="ln" style="left:339px;background:#3b7df5"></div>
  <svg class="sc" style="left:405px" width="12" height="12"><circle cx="6" cy="6" r="4.5" fill="#fff" stroke="#3b7df5" stroke-width="3"/></svg>
  <div class="sl" style="left:424px;color:#3b7df5">文件处理</div>
  <div class="pv" style="left:154px;color:#3b7df5">〈 上一步</div>
  <div class="a" style="left:231px;top:123px;width:1px;height:14px;background:#e3e6eb"></div>
  <div class="pv" style="left:262px;color:#bbb">下一步 〉</div>
  <div class="red" style="left:404px;top:90px;width:74px;height:20px"></div>
 </div>
 <div class="lb" style="left:229px;top:162px">处理方式</div>
 <svg class="a" style="left:328px;top:163px" width="11" height="11"><rect width="11" height="11" rx="2" fill="#dfe2e7"/><path d="M2.5 5.5l2.2 2.2L8.8 3.3" stroke="#fff" stroke-width="1.4" fill="none"/></svg>
 <div class="tx" style="left:344px;top:162px;color:#bbb">定时计算</div>
 <div class="cb" style="left:424px;top:163px;width:11px;height:12px"></div><div class="tx" style="left:440px;top:162px">邮件通知</div>
 <div class="cb" style="left:520px;top:163px;width:11px;height:12px"></div><div class="tx" style="left:537px;top:162px">客户端通知</div>
 <svg class="a" style="left:628px;top:163px" width="11" height="12"><rect width="11" height="12" rx="2" fill="#3b7df5"/><path d="M2.5 6l2.2 2.4L8.8 3.5" stroke="#fff" stroke-width="1.5" fill="none"/></svg>
 <div class="tx" style="left:644px;top:162px">创建数知鸟需求</div>
 <div class="red" style="left:626px;top:162px;width:92px;height:15px"></div>
 <div class="a" style="left:229px;top:192px;width:954px;height:1px;background:#e3e6eb"></div>
 <div class="a" style="left:401px;top:193px;width:1px;height:374px;background:#e8eaee"></div>
 <div class="tx" style="left:238px;top:196px;color:#999">定时计算</div>
 <div class="a" style="left:229px;top:214px;width:169px;height:19px;background:#e9f0fd"></div>
 <div class="tx" style="left:238px;top:217px;color:#3b7df5">创建数知鸟需求</div>
 <div class="a" style="left:507px;top:207px;width:1px;height:18px;background:#e3e6eb"></div>
 <div class="tx" style="left:411px;top:209px;font-weight:bold;color:#222">Webhook地址</div>
 <div class="tx" style="left:512px;top:209px;color:#333">https://hook.test.shuzhiniao.com/api/w/b4406c3...</div>
 <div class="red" style="left:409px;top:206px;width:356px;height:20px"></div>
 <div class="a" style="left:1147px;top:523px;width:43px;height:43px;border-radius:50%;background:#3a86f3;color:#fff;font-size:30px;font-weight:bold;line-height:43px;text-align:center">?</div>
 <div class="a" style="left:1179px;top:526px;width:6px;height:6px;border-radius:50%;background:#e8474a;box-shadow:0 0 3px 2px rgba(232,71,74,.2)"></div>
 <div class="a" style="left:1198px;top:0;width:2px;height:575px;background:#f0f1f3"></div>
</div>

</div></body></html>
